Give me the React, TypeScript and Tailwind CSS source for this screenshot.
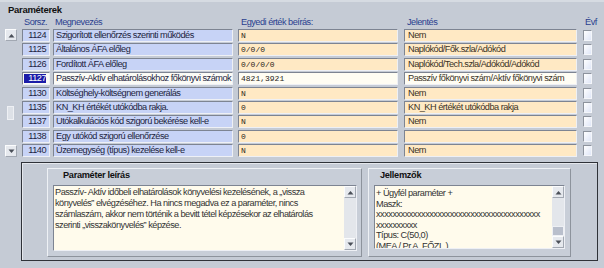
import React from "react";

type Row = { no: string; name: string; val: string; mean: string; sel?: boolean };

const rows: Row[] = [
  { no: "1124", name: "Szigorított ellenőrzés szerinti működés", val: "N", mean: "Nem" },
  { no: "1125", name: "Általános ÁFA előleg", val: "0/0/0", mean: "Naplókód/Fők.szla/Adókód" },
  { no: "1126", name: "Fordított ÁFA előleg", val: "0/0/0/0", mean: "Naplókód/Tech.szla/Adókód/Adókód" },
  {
    no: "1127",
    name: "Passzív-Aktív elhatárolásokhoz főkönyvi számok",
    val: "4821,3921",
    mean: "Passzív főkönyvi szám/Aktív főkönyvi szám",
    sel: true,
  },
  { no: "1130", name: "Költséghely-költségnem generálás", val: "N", mean: "Nem" },
  { no: "1135", name: "KN_KH értékét utókódba rakja.", val: "0", mean: "KN_KH értékét utókódba rakja" },
  { no: "1137", name: "Utókalkulációs kód szigorú bekérése kell-e", val: "N", mean: "Nem" },
  { no: "1138", name: "Egy utókód szigorú ellenőrzése", val: "0", mean: "" },
  { no: "1140", name: "Üzemegység (típus) kezelése kell-e", val: "N", mean: "Nem" },
];

const sunken =
  "border-t border-l border-t-[#7d8492] border-l-[#7d8492] border-b border-r border-b-[#eef0f5] border-r-[#eef0f5]";
const raised =
  "border-t border-l border-t-[#eef1f5] border-l-[#eef1f5] border-b border-r border-b-[#8d939c] border-r-[#8d939c]";

function Arrow({ up }: { up?: boolean }) {
  return (
    <svg width="7" height="5" viewBox="0 0 7 5">
      {up ? (
        <path d="M0.5 4.5 L3.5 1 L6.5 4.5 Z" fill="#4a4f58" />
      ) : (
        <path d="M0.5 0.5 L3.5 4 L6.5 0.5 Z" fill="#4a4f58" />
      )}
    </svg>
  );
}

function ScrollBtn({ up }: { up?: boolean }) {
  return (
    <div className="w-[12px] h-[12px] flex items-center justify-center bg-[#e6e9ee] border-t border-l border-t-[#fbfcfd] border-l-[#fbfcfd] border-b border-r border-b-[#a2a8b2] border-r-[#a2a8b2]">
      <Arrow up={up} />
    </div>
  );
}

function Checkbox() {
  return (
    <div className="w-[9px] h-[11px] bg-gradient-to-br from-white to-[#dfe6f7] border-t border-l border-t-[#8d939d] border-l-[#8d939d] border-b border-r border-b-[#f4f6fa] border-r-[#f4f6fa]" />
  );
}

export default function App() {
  return (
    <div className="w-[604px] h-[268px] overflow-hidden bg-[#c5cbd5] border-t-2 border-[#d6dbe2] font-['Liberation_Sans',Arial,sans-serif] text-[9.2px] tracking-[-0.5px] text-[#1d2440]">
      <div className="pl-[8px] pt-[2px] h-[14px] leading-[12px] font-bold text-[9.5px] tracking-[-0.3px] text-[#111]">
        Paraméterek
      </div>

      {/* header */}
      <div className="flex h-[11px] leading-[11px] mt-[1px] text-[#2b3f8f]">
        <div className="w-[24px] shrink-0" />
        <div className="w-[31px] shrink-0">Sorsz.</div>
        <div className="w-[186px] shrink-0">Megnevezés</div>
        <div className="w-[166px] shrink-0">Egyedi érték beírás:</div>
        <div className="w-[178px] shrink-0">Jelentés</div>
        <div>Évf</div>
      </div>

      <div className="flex mt-[1px] h-[128px]">
        {/* table scrollbar */}
        <div className="ml-[5px] w-[12px] h-[128px] flex flex-col justify-between">
          <ScrollBtn up />
          <div className="flex-1 relative">
            <div className="absolute left-[2px] top-[65px] w-[7px] h-[14px] bg-[#dde1e7] border border-[#eef0f4]" />
          </div>
          <ScrollBtn />
        </div>

        {/* rows */}
        <div className="ml-[5px] flex flex-col justify-between h-[128px]">
          {rows.map((r) => (
            <div key={r.no} className="flex h-[13px] leading-[11px]">
              <div
                className={`w-[28px] shrink-0 flex pr-[3px] ${sunken} ${r.sel ? "bg-[#fbfbf6] pl-[1px] py-[1px]" : "bg-[#c7d3f6] justify-end"}`}
              >
                {r.sel ? (
                  <span className="flex-1 bg-[#1c1ca8] text-white text-right leading-[9px]">{r.no}</span>
                ) : (
                  <span>{r.no}</span>
                )}
              </div>
              <div
                className={`ml-[3px] w-[180px] shrink-0 pl-[2px] overflow-hidden whitespace-nowrap ${sunken} ${r.sel ? "bg-[#fbfbf6]" : "bg-[#c7d3f6]"}`}
              >
                {r.name}
              </div>
              <div
                className={`ml-[5px] w-[160px] shrink-0 pl-[2px] font-['Liberation_Mono',monospace] text-[8px] tracking-normal text-[#2a2418] ${sunken} ${r.sel ? "bg-[#fffdf3]" : "bg-[#ffe9c4]"}`}
              >
                {r.val}
              </div>
              <div
                className={`ml-[6px] w-[173px] shrink-0 pl-[3px] overflow-hidden whitespace-nowrap text-[#3a3226] ${sunken} ${r.sel ? "bg-[#fffdf3]" : "bg-[#ffe9c4]"}`}
              >
                {r.mean}
              </div>
              <div className="ml-[6px] flex items-center">
                <Checkbox />
              </div>
            </div>
          ))}
        </div>
      </div>

      {/* bottom box */}
      <div className="ml-[21px] mt-[5px] w-[577px] h-[99px] border border-[#2f3238] shadow-[inset_1px_1px_0_#e4e7ec]">
        <div className="flex pl-[25px] pt-[5px] gap-[6px]">
          {/* leírás */}
          <div className={`w-[315px] h-[89px] bg-[#c8ced8] ${raised}`}>
            <div className="pl-[15px] h-[12px] leading-[12px] font-bold text-[#111] tracking-[-0.3px]">
              Paraméter leírás
            </div>
            <div className={`ml-[5px] mt-[4px] w-[304px] h-[66px] flex bg-[#fffbec] ${sunken}`}>
              <div className="flex-1 pl-[1px] pt-[1px] leading-[11px] text-[#333] whitespace-nowrap overflow-hidden">
                <div>Passzív- Aktív időbeli elhatárolások könyvelési kezelésének, a „vissza</div>
                <div>könyvelés” elvégzéséhez. Ha nincs megadva ez a paraméter, nincs</div>
                <div>számlaszám, akkor nem történik a bevitt tétel képzésekor az elhatárolás</div>
                <div>szerinti „visszakönyvelés” képzése.</div>
              </div>
              <div className="w-[12px] flex flex-col justify-between bg-[#e3e6eb]">
                <ScrollBtn up />
                <ScrollBtn />
              </div>
            </div>
          </div>

          {/* jellemzők */}
          <div className={`w-[203px] h-[89px] bg-[#c8ced8] ${raised}`}>
            <div className="pl-[11px] h-[12px] leading-[12px] font-bold text-[#111] tracking-[-0.3px]">Jellemzők</div>
            <div className={`ml-[5px] mt-[4px] w-[191px] h-[64px] flex bg-[#fffbec] ${sunken}`}>
              <div className="flex-1 pl-[1px] pt-[2px] leading-[10.5px] text-[#333] whitespace-nowrap overflow-hidden">
                <div>+ Ügyfél paraméter +</div>
                <div>Maszk:</div>
                <div>xxxxxxxxxxxxxxxxxxxxxxxxxxxxxxxxxxxxxxxx</div>
                <div>xxxxxxxxxx</div>
                <div>Típus: C(50,0)</div>
                <div>(MEA / Pr.A. FŐZL.)</div>
              </div>
              <div className="w-[12px] flex flex-col bg-[#e3e6eb]">
                <ScrollBtn up />
                <div className="flex-1 flex flex-col justify-end">
                  <div className="h-[10px] bg-[#b9bfcc] border border-[#eef0f4]" />
                </div>
                <ScrollBtn />
              </div>
            </div>
          </div>
        </div>
      </div>
    </div>
  );
}
